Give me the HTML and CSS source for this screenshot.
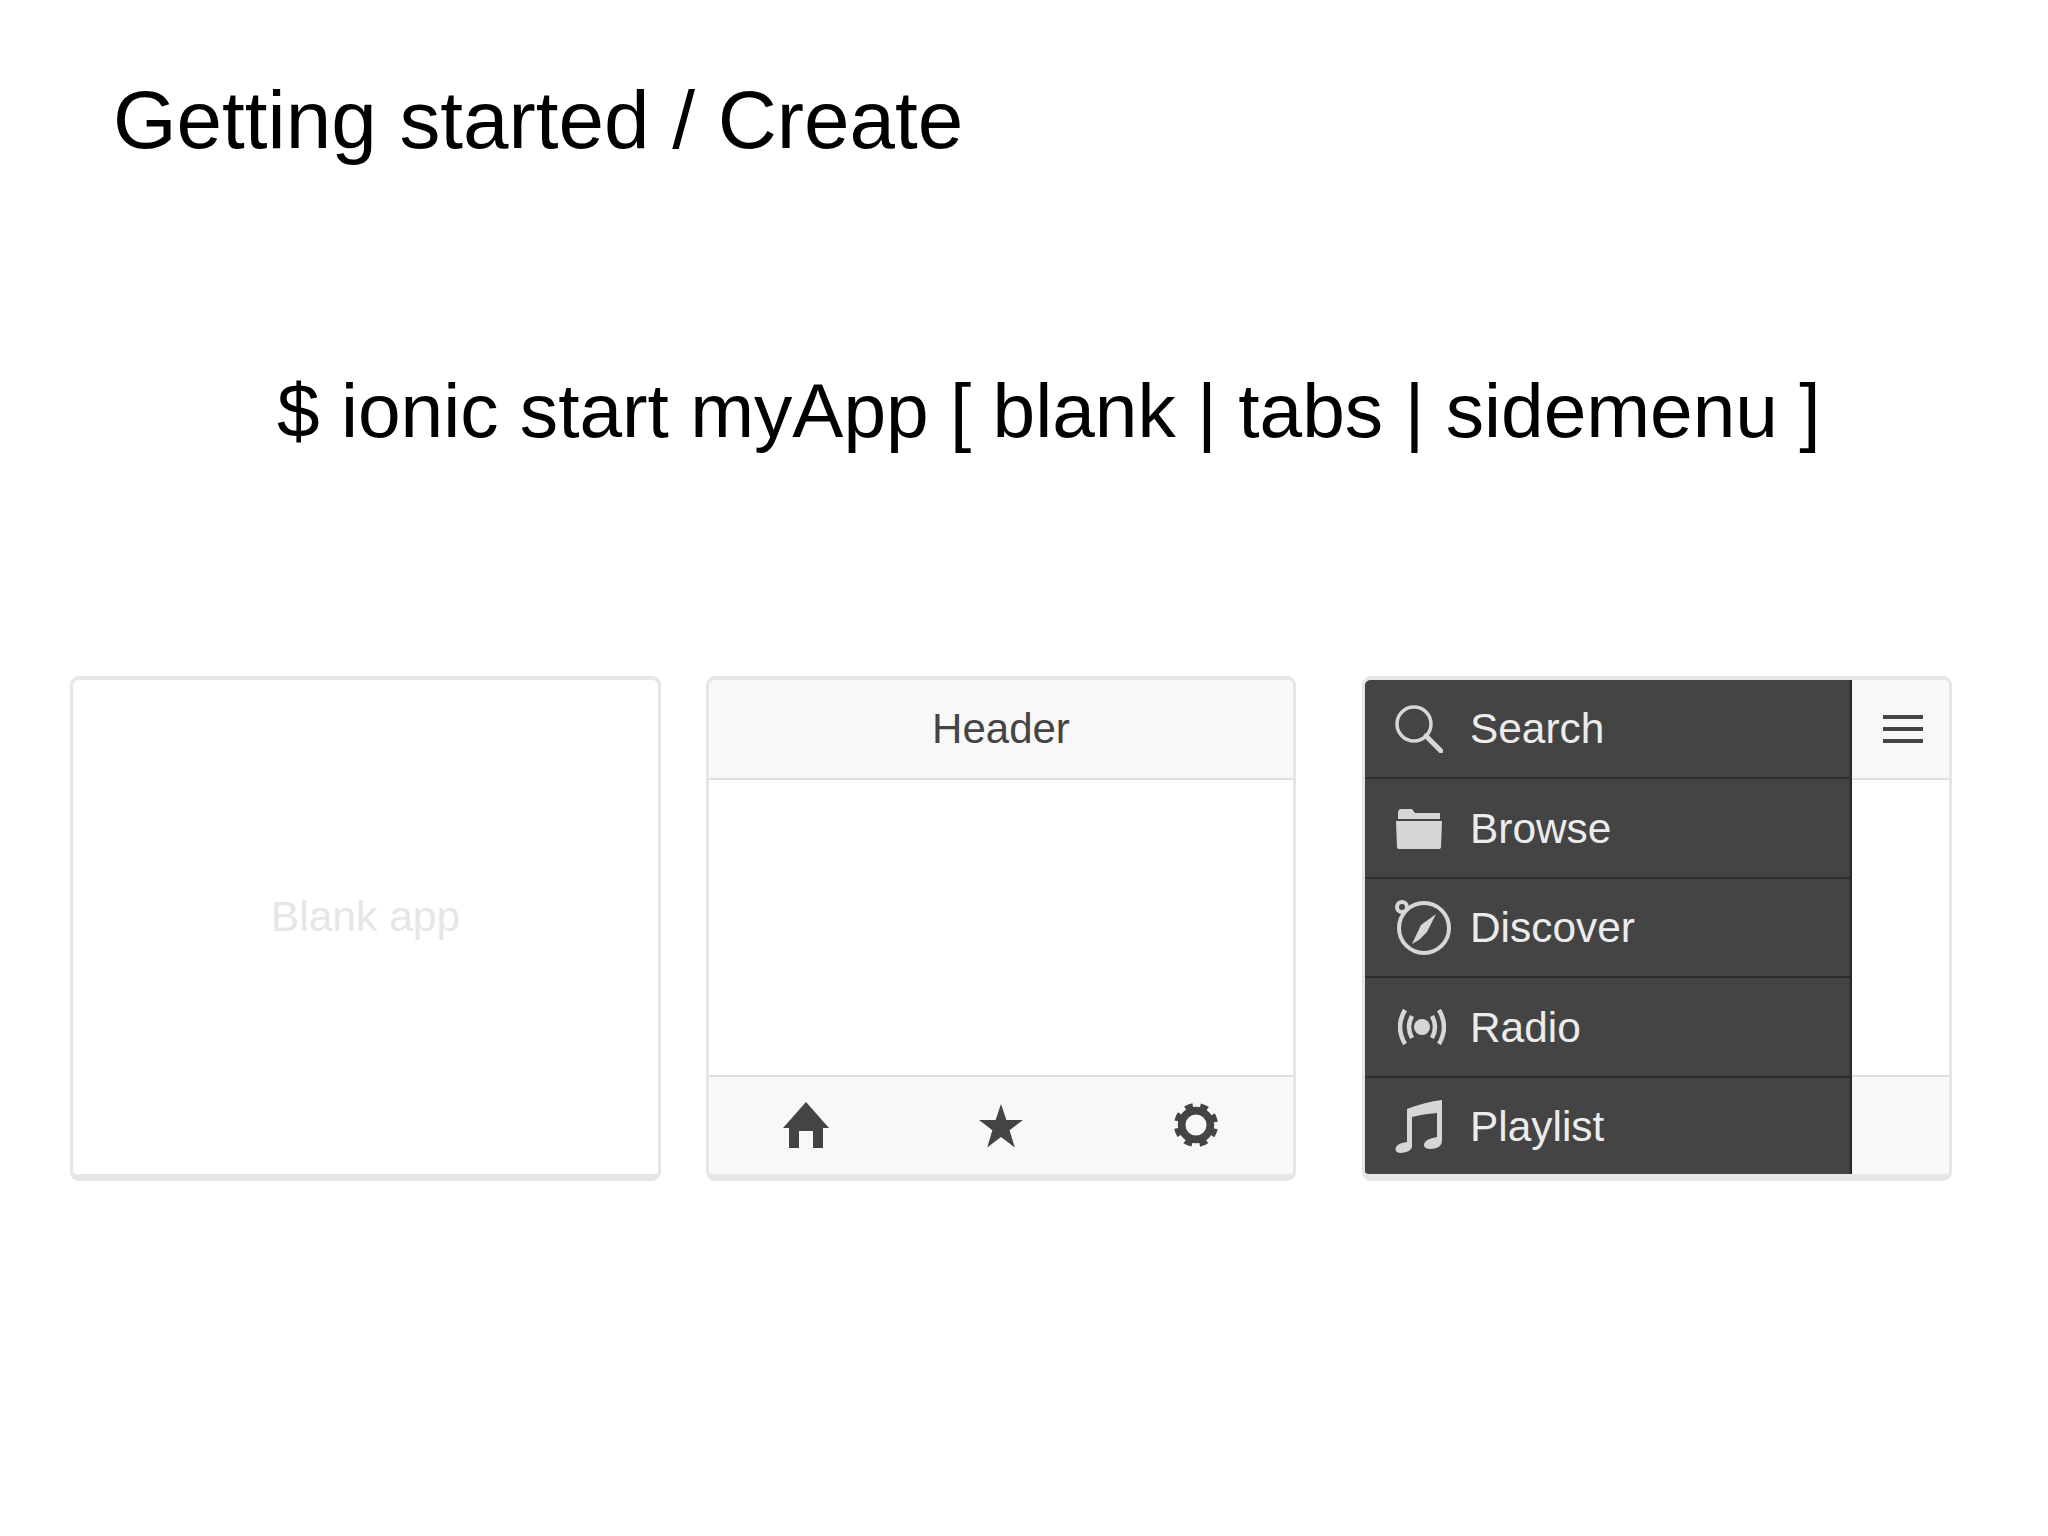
FILE: index.html
```html
<!DOCTYPE html>
<html lang="en">
<head>
<meta charset="utf-8">
<title>Getting started / Create</title>
<link rel="stylesheet" href="styles.css">
</head>
<body>
<main class="slide">
  <h1 class="title">Getting started / Create</h1>
  <p class="command">$ ionic start myApp [ blank | tabs | sidemenu ]</p>
  <section class="cards">
    <article class="card card-blank"><span class="blank-label">Blank app</span></article>

    <article class="card card-tabs">
      <header class="bar bar-top"><span class="bar-title">Header</span></header>
      <div class="content"></div>
      <footer class="bar bar-bottom">
        <svg class="tab-icon" viewBox="0 0 46 46"><path d="M23 0 L46 26 H40 V46 H30 V29 H16 V46 H6 V26 H0 Z"/></svg>
        <svg class="tab-icon" viewBox="0 0 46 46"><path d="M23 2 L28.4 18 H45 L31.6 28.2 L36.8 45.5 L23 35 L9.2 45.5 L14.4 28.2 L1 18 H17.6 Z"/></svg>
        <svg class="tab-icon" viewBox="-24 -24 48 48"><circle class="gear-ring" r="15"/><circle class="gear-teeth" r="20" transform="rotate(11)"/></svg>
      </footer>
    </article>

    <article class="card card-side">
      <header class="bar bar-top bar-menu">
        <svg class="burger" viewBox="0 0 40 28"><path d="M0 2 H40 M0 14 H40 M0 26 H40"/></svg>
      </header>
      <div class="content"></div>
      <footer class="bar bar-bottom"></footer>
      <nav class="menu">
        <div class="menu-row">
          <svg class="menu-icon" viewBox="0 0 48 48"><g class="line"><circle cx="19" cy="19" r="17"/><path class="thick" d="M31 31 L46 46"/></g></svg>
          <span>Search</span>
        </div>
        <div class="menu-row">
          <svg class="menu-icon" viewBox="0 0 48 48"><path class="solid" d="M3 9 Q3 5 6 5 H17 L20 9 H45 V15 H3 Z M1 17 H47 L46 43 Q46 45 44 45 H4 Q2 45 2 43 Z"/></svg>
          <span>Browse</span>
        </div>
        <div class="menu-row">
          <svg class="menu-icon" viewBox="0 0 56 56"><g class="line line-wide"><circle cx="29" cy="29" r="25"/><circle cx="7" cy="8" r="5"/></g><path class="solid" d="M41 15 L32 33 L24 41 L17 45 L26 26 Z"/></svg>
          <span>Discover</span>
        </div>
        <div class="menu-row">
          <svg class="menu-icon" viewBox="0 0 48 38"><circle class="solid" cx="24" cy="19" r="8"/><g class="line arcs"><path d="M7 2 Q-3 19 7 36 M41 2 Q51 19 41 36 M14 8 Q8 19 14 30 M34 8 Q40 19 34 30"/></g></svg>
          <span>Radio</span>
        </div>
        <div class="menu-row">
          <svg class="menu-icon" viewBox="0 0 48 54"><path class="solid" d="M12 10 Q30 3 47 1 V42 Q47 49 36 50 Q28 50 29 45 Q30 40 42 38 V14 Q28 15 17 18 V48 Q16 53 6 54 Q-1 54 1 48 Q3 44 12 43 Z"/></svg>
          <span>Playlist</span>
        </div>
      </nav>
    </article>
  </section>
</main>
</body>
</html>
```

FILE: styles.css
```css
* { box-sizing: border-box; }
html, body { margin: 0; padding: 0; background: #fff; }
.slide {
  width: 2048px;
  height: 1536px;
  overflow: hidden;
  font-family: "Liberation Sans", Arial, sans-serif;
}
.title {
  margin: 0;
  padding: 73px 0 0 113px;
  font-size: 81.8px;
  line-height: 94px;
  font-weight: 400;
  color: #000;
}
.command {
  margin: 0;
  padding: 200px 0 0 277px;
  font-size: 76.65px;
  line-height: 88px;
  color: #000;
  white-space: nowrap;
}
.cards {
  display: flex;
  margin: 221px 0 0 70px;
}
.card {
  position: relative;
  display: flex;
  flex-direction: column;
  height: 505px;
  border: 3px solid #e6e6e6;
  border-top-width: 4px;
  border-bottom-width: 7px;
  border-radius: 9px;
  background: #fff;
  overflow: hidden;
}
.card-blank { width: 591px; align-items: center; justify-content: center; }
.card-tabs { width: 590px; margin-left: 45px; }
.card-side { width: 590px; margin-left: 66px; }
.blank-label { font-size: 42.6px; line-height: 48px; color: #e6e6e6; margin-top: -22px; }
.bar {
  flex: none;
  height: 100px;
  display: flex;
  align-items: center;
  background: #f8f8f8;
}
.bar-top { justify-content: center; border-bottom: 2px solid #dfdfdf; }
.bar-bottom { justify-content: space-between; padding: 0 74px; height: 99px; border-top: 2px solid #dfdfdf; }
.bar-title { font-size: 42px; color: #444; }
.bar-menu { justify-content: flex-end; padding-right: 26px; }
.content { flex: 1; background: #fff; }
.tab-icon { width: 46px; height: 46px; margin-top: -2px; fill: #444; }
.gear-ring { fill: none; stroke: #444; stroke-width: 8px; }
.gear-teeth { fill: none; stroke: #444; stroke-width: 6px; stroke-dasharray: 8 7.708; }
.burger { width: 40px; height: 28px; stroke: #444; stroke-width: 4px; fill: none; }
.menu {
  position: absolute;
  top: 0;
  left: 0;
  bottom: 0;
  width: 487px;
  display: flex;
  flex-direction: column;
  background: #444;
  box-shadow: inset -3px 0 2px -1px #262626;
}
.menu-row {
  position: relative;
  flex: none;
  height: 99.4px;
  display: flex;
  align-items: center;
  padding-left: 105px;
  font-size: 42.4px;
  color: #ececec;
  border-bottom: 2px solid #2c2c2c;
}
.menu-row + .menu-row { padding-top: 2px; }
.menu-row:last-child { flex: 1; border-bottom: 0; padding-top: 3px; }
.menu-icon { position: absolute; left: 30px; top: 50%; transform: translateY(-50%); width: 48px; height: 48px; }
.menu-row:nth-child(3) .menu-icon { width: 56px; height: 56px; }
.menu-row:nth-child(4) .menu-icon { left: 33px; height: 38px; }
.menu-row:nth-child(5) .menu-icon { height: 54px; }
.line { fill: none; stroke: #d6d6d6; stroke-width: 3.5px; }
.line-wide { stroke-width: 4px; }
.thick { stroke-width: 5px; stroke-linecap: round; }
.arcs { stroke-width: 4.5px; }
.solid { fill: #d6d6d6; }
```
